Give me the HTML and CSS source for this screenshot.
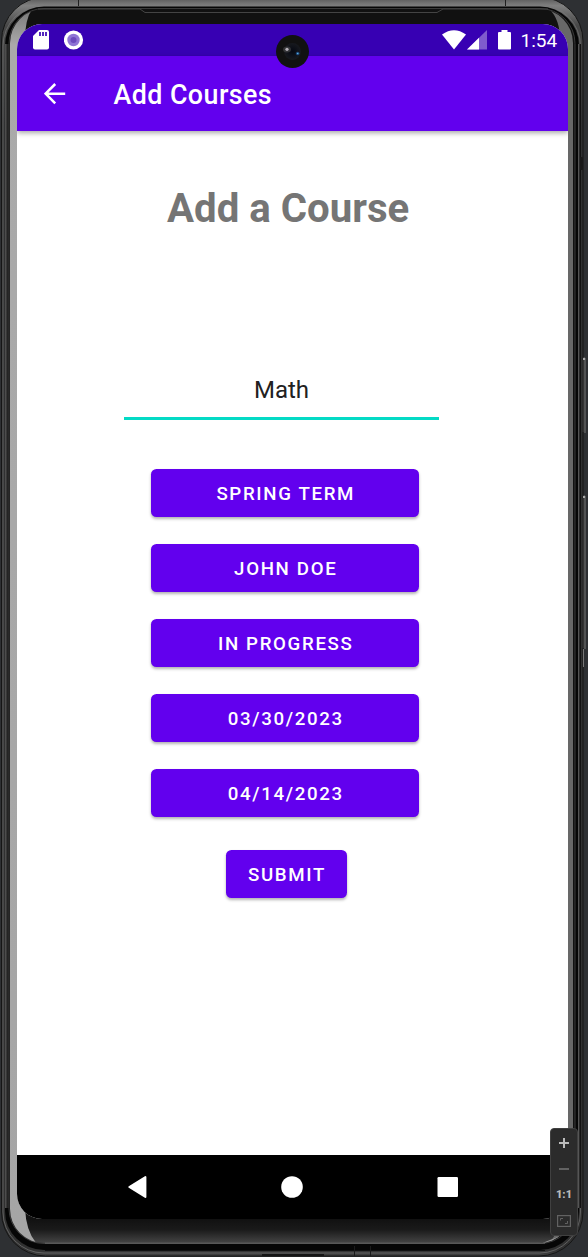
FILE: index.html
```html
<!DOCTYPE html>
<html lang="en">
<head>
<meta charset="utf-8">
<title>Add Courses</title>
<link rel="stylesheet" href="styles.css">
</head>
<body>
<div class="device">
  <svg class="shell" viewBox="0 0 588 1257" aria-hidden="true">
    <defs>
      <linearGradient id="topMetal" gradientUnits="userSpaceOnUse" x1="0" y1="0" x2="0" y2="1257">
        <stop offset="0" stop-color="#626262"/><stop offset=".0045" stop-color="#808080"/>
        <stop offset=".02" stop-color="#484848"/><stop offset=".1" stop-color="#303132"/>
        <stop offset=".96" stop-color="#303030"/><stop offset=".994" stop-color="#303030"/>
        <stop offset="1" stop-color="#444"/>
      </linearGradient>
      <linearGradient id="chin" x1="0" y1="0" x2="0" y2="1">
        <stop offset="0" stop-color="#101010"/><stop offset=".45" stop-color="#1a1a1a"/><stop offset="1" stop-color="#484848"/>
      </linearGradient>
      <linearGradient id="leftEdge" x1="0" y1="0" x2="1" y2="0">
        <stop offset="0" stop-color="#575757"/><stop offset=".5" stop-color="#242424"/><stop offset="1" stop-color="#080808"/>
      </linearGradient>
      <linearGradient id="silver" x1="0" y1="0" x2="0" y2="1">
        <stop offset="0" stop-color="#777"/><stop offset=".03" stop-color="#aaa"/><stop offset="1" stop-color="#a5a5a5"/>
      </linearGradient>
      <radialGradient id="lens"><stop offset="0" stop-color="#050812"/><stop offset="1" stop-color="#17191e"/></radialGradient>
      <clipPath id="glass"><rect x="10" y="9" width="563" height="1234" rx="34"/></clipPath>
    </defs>
    <rect x="1.5" y="-3" width="581.5" height="1259" rx="44" fill="url(#topMetal)" stroke="#151515"/>
    <rect x="3" y="5" width="577.5" height="1248" rx="41" fill="none" stroke="#7a7a7a" stroke-width="1" opacity=".65"/>
    <rect x="5" y="6.5" width="574" height="1243.5" rx="39" fill="#060606"/>
    <rect x="5" y="44" width="5" height="1164" fill="url(#leftEdge)"/>
    <rect x="9" y="8.5" width="566" height="1235" rx="35" fill="#111" stroke="#3a3a3a"/>
    <g clip-path="url(#glass)">
      <rect x="9" y="1218" width="566" height="26" fill="url(#chin)"/>
      <path d="M10 8H33Q25 18 25 40V1208Q26 1232 37 1244H10Z" fill="url(#silver)"/>
      <path d="M573 8H548Q560 18 560 40V1208Q560 1233 548 1244H573Z" fill="#686868"/>
      <path d="M560 1236H573L556 1244H540Z" fill="#999"/>
    </g>
    <path d="M45 1243.2H545" stroke="#666"/>
    <path d="M38 9H140L145 12.5H437L443 9H548" fill="none" stroke="#444"/>
    <path d="M45 1250.5H545" stroke="#111"/>
    <path d="M262 1255H324" stroke="#151515" stroke-width="2"/>
    <path d="M354.5 1246V1256M370.5 1246V1256" stroke="#1b1b1b"/>
    <path d="M78.5 0V6M505.5 0V6" stroke="#202020"/>
    <path d="M574.5 44V1208M580 44V1208" stroke="#252525"/>
    <path d="M578.5 44V1208" stroke="#555"/>
    <path d="M580.5 44V1208" stroke="#111"/>
    <rect x="580" y="157" width="3" height="13" rx="1" fill="#181818"/>
    <path d="M583.5 360V432M583.5 498V648" stroke="#343434" stroke-width="2"/>
    <path d="M583.5 358H585V433M583.5 496H585V649M583.5 649V667" fill="none" stroke="#777"/>
    <path d="M583 359h2M583 497h2" stroke="#aaa" stroke-width="2"/>
  </svg>

  <main class="screen">
    <header class="status">
      <div class="status-group">
        <svg width="16" height="20" viewBox="0 0 16 20"><path d="M6 0H14Q16 0 16 2V17.5Q16 19.5 14 19.5H2Q0 19.5 0 17.5V6Z" fill="#fff"/><path d="M7 2V6M10 2V6M13 2V6" stroke="#3700b3" stroke-width="1.7"/></svg>
        <svg class="ring" width="20" height="20" viewBox="0 0 20 20"><circle cx="9.5" cy="10" r="9.6" fill="#fff"/><circle cx="9.5" cy="10" r="6.2" fill="#8f75d5"/><circle cx="9.5" cy="10" r="3" fill="#6c4bbd"/></svg>
      </div>
      <div class="status-group">
        <svg width="24" height="20" viewBox="0 0 24 20"><path d="M0 4.5Q12-4 24 4.5L12 19.5Z" fill="#fff"/></svg>
        <svg class="cell" width="20" height="20" viewBox="0 0 20 20"><path d="M0 19.5L20 0V19.5Z" fill="#7f5ccd"/><path d="M0 19.5L12 7.8V19.5Z" fill="#fff"/></svg>
        <svg class="battery" width="13" height="20" viewBox="0 0 13 20"><path d="M3.5 0H9.5V2H12Q13 2 13 3V18.5Q13 19.5 12 19.5H1Q0 19.5 0 18.5V3Q0 2 1 2H3.5Z" fill="#fff"/></svg>
        <span class="time">1:54</span>
      </div>
    </header>
    <div class="appbar">
      <svg class="back" width="22" height="22" viewBox="0 0 22 22"><path d="M21.2 10.7H2M11.2 1L1.6 10.7L11.2 20.4" fill="none" stroke="#fff" stroke-width="2.5"/></svg>
      <h1 class="bar-title">Add Courses</h1>
    </div>
    <section class="content">
      <h2 class="heading">Add a Course</h2>
      <div class="field">Math</div>
      <div class="choices">
        <button class="btn">SPRING TERM</button>
        <button class="btn">JOHN DOE</button>
        <button class="btn">IN PROGRESS</button>
        <button class="btn">03/30/2023</button>
        <button class="btn">04/14/2023</button>
      </div>
      <button class="btn submit">SUBMIT</button>
    </section>
    <nav class="navbar">
      <svg width="20" height="24" viewBox="0 0 20 24"><path d="M18.4 2V22L2.3 12Z" fill="#fff" stroke="#fff" stroke-width="2" stroke-linejoin="round"/></svg>
      <svg width="22" height="22" viewBox="0 0 22 22"><circle cx="11" cy="11" r="10.8" fill="#fff"/></svg>
      <svg width="21" height="20" viewBox="0 0 21 20"><rect x=".5" width="20.5" height="20" rx="1.2" fill="#fff"/></svg>
    </nav>
  </main>

  <svg class="camera" width="34" height="34" viewBox="0 0 34 34"><circle cx="16.5" cy="16.5" r="16.5" fill="#111"/><circle cx="16.5" cy="16.5" r="8.4" fill="url(#lens)"/><ellipse cx="11" cy="14.5" rx="4" ry="3" fill="#555" opacity=".5"/><circle cx="11" cy="14.3" r="1.6" fill="#b5b0b8"/><circle cx="21.7" cy="18.5" r="1.8" fill="#1d4778"/><circle cx="21.7" cy="18.5" r=".8" fill="#5ab0df"/></svg>

  <aside class="zoombar">
    <svg width="12" height="12" viewBox="0 0 12 12"><path d="M6 1V11M1 6H11" stroke="#bbb" stroke-width="2"/></svg>
    <svg width="12" height="12" viewBox="0 0 12 12"><path d="M1 6H11" stroke="#626262" stroke-width="2"/></svg>
    <span class="ratio">1:1</span>
    <svg width="14" height="12" viewBox="0 0 14 12"><rect x=".6" y=".6" width="12.8" height="10.8" fill="none" stroke="#626262" stroke-width="1.2"/><path d="M3.5 5.5V3.5H6M8 8.5H10.5V6" fill="none" stroke="#626262"/></svg>
  </aside>
</div>
</body>
</html>
```
FILE: styles.css
```css
* { box-sizing: border-box; }
body { margin: 0; background: #2e3033; font-family: Roboto, sans-serif; overflow: hidden; }
svg { display: block; flex: none; }
.device { position: relative; width: 588px; height: 1257px; padding: 24px 20px 38px 17px; }
.shell { position: absolute; inset: 0; width: 588px; height: 1257px; }
.screen { position: relative; height: 1195px; display: flex; flex-direction: column; background: #fff; border-radius: 25px; overflow: hidden; }
.status { height: 32px; flex: none; background: #3700b3; display: flex; justify-content: space-between; padding: 6px 9.5px 0 16px; }
.status-group { display: flex; }
.ring { margin-left: 15px; }
.cell { margin-left: 1.5px; }
.battery { margin-left: 10.5px; }
.time { margin-left: 10px; width: 38px; font-size: 19px; line-height: 22px; color: #fff; white-space: nowrap; }
.appbar { height: 75px; flex: none; position: relative; background: #6200ee; display: flex; align-items: center; padding-left: 27px; box-shadow: 0 2px 5px rgba(0,0,0,.35); }
.bar-title { margin: 2px 0 0 47.5px; color: #fff; font-size: 26.8px; font-weight: 500; letter-spacing: .45px; line-height: 32px; }
.content { flex: 1; display: flex; flex-direction: column; padding-top: 54px; }
.heading { width: 242px; margin: 0 0 0 150px; font-size: 40.2px; line-height: 48px; font-weight: 700; color: #757575; white-space: nowrap; }
.field { width: 315px; height: 48px; margin: 139px 0 0 107px; border-bottom: 3px solid #03dac5; text-align: center; font-size: 24px; line-height: 36px; color: #212121; }
.choices { display: flex; flex-direction: column; gap: 27px; width: 268px; margin: 49px 0 0 134px; }
.btn { height: 48px; padding: 2px 0 0 1.5px; border: 0; border-radius: 5.5px; background: #6200ee; color: #fff; font-family: Roboto, sans-serif; font-size: 18.7px; font-weight: 500; letter-spacing: 1.65px; box-shadow: 0 2px 3px rgba(0,0,0,.3); }
.submit { width: 120.5px; margin: 33px 0 0 209px; }
.navbar { height: 64px; flex: none; background: #000; display: flex; align-items: center; justify-content: space-between; padding: 0 110px 1px 110px; }
.camera { position: absolute; left: 276px; top: 35px; }
.zoombar { position: absolute; left: 550px; top: 1128px; width: 28px; height: 108px; background: #2b2b2b; border: 1px solid #404040; border-radius: 4px; display: flex; flex-direction: column; align-items: center; justify-content: space-between; padding: 8px 0 8px; }
.ratio { padding-top: 1px; font-size: 11px; line-height: 12px; font-weight: 900; color: #bbb; }
```
